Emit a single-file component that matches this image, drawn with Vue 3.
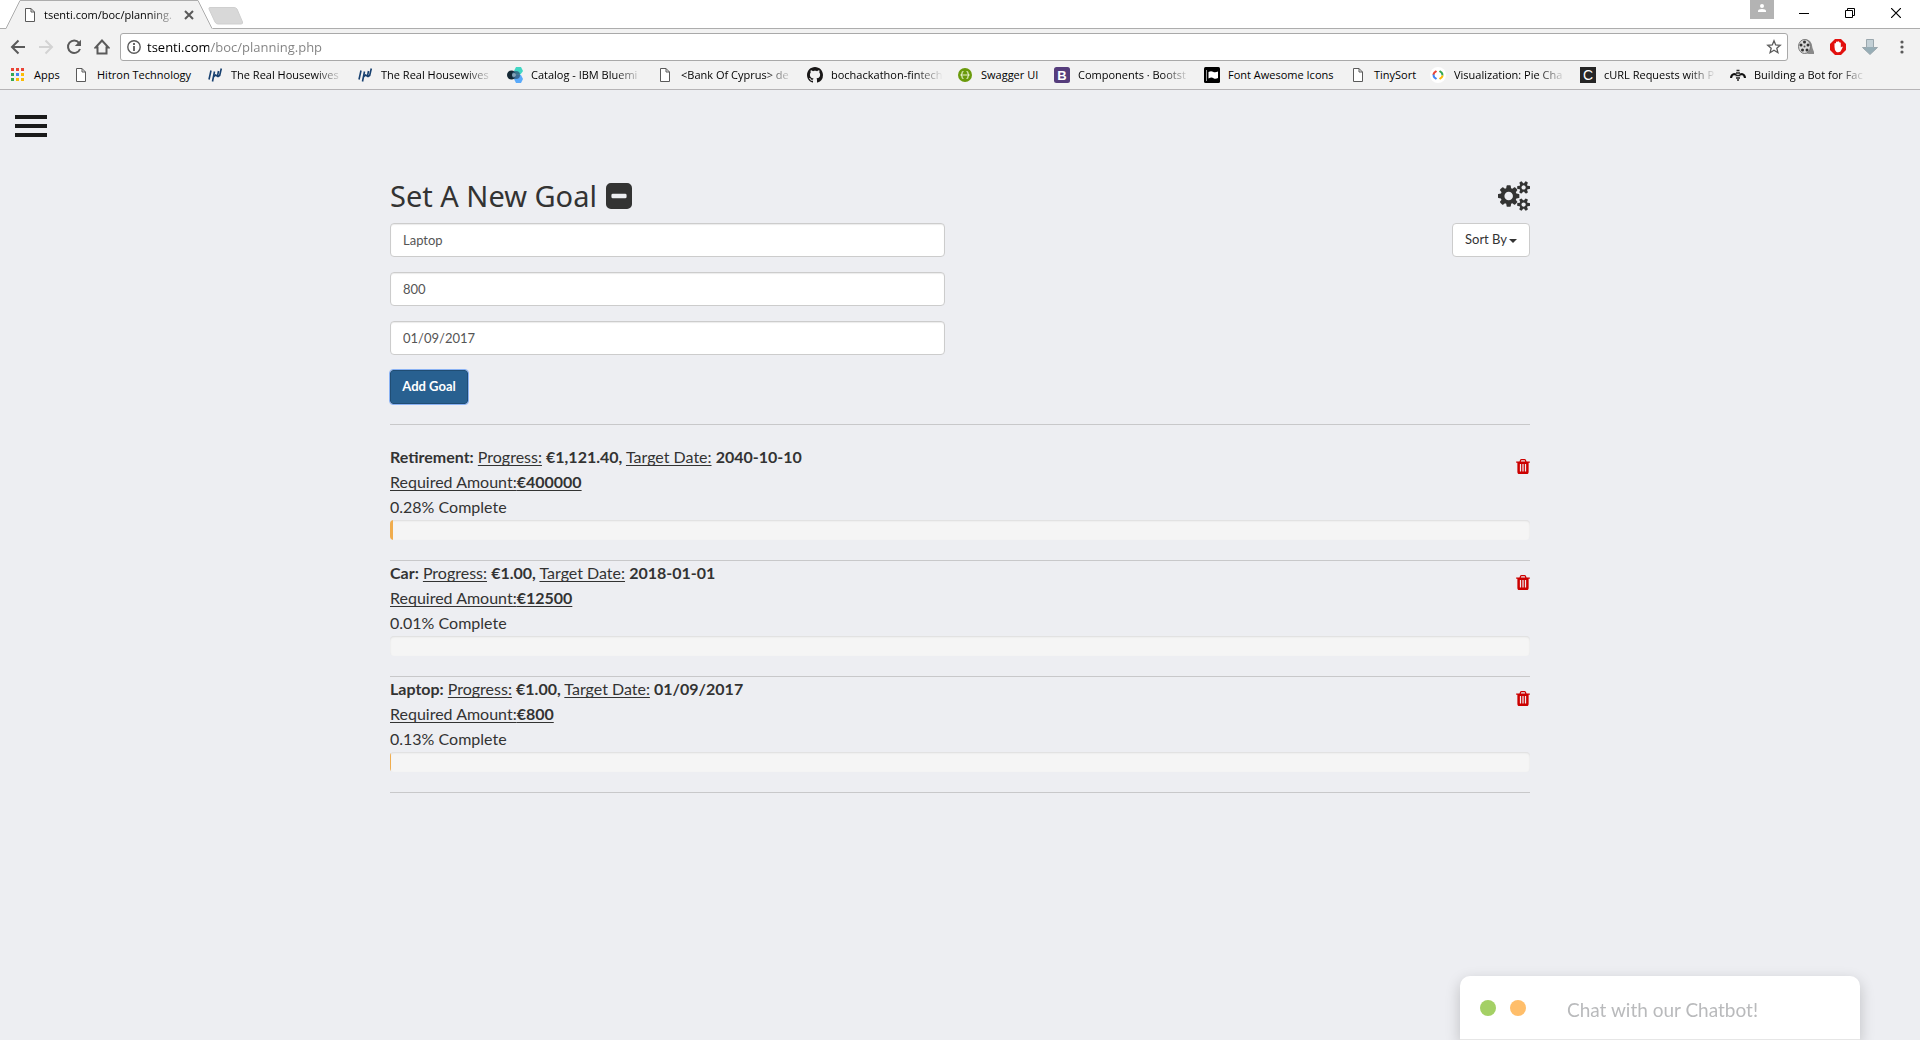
<script setup>
import { ref } from 'vue'

const url = ref('tsenti.com/boc/planning.php')
const goalName = ref('Laptop')
const goalAmount = ref('800')
const goalDate = ref('01/09/2017')
const sortBy = ref('')

const bookmarks = [
  { icon: 'apps', label: 'Apps', width: 25 },
  { icon: 'page', label: 'Hitron Technology', width: 96 },
  { icon: 'waves', label: 'The Real Housewives', width: 112 },
  { icon: 'waves', label: 'The Real Housewives', width: 112 },
  { icon: 'bluemix', label: 'Catalog - IBM Bluemi', width: 112 },
  { icon: 'page', label: '<Bank Of Cyprus> de', width: 112 },
  { icon: 'github', label: 'bochackathon-fintech', width: 112 },
  { icon: 'swagger', label: 'Swagger UI', width: 59 },
  { icon: 'bootstrap', label: 'Components · Bootst', width: 112 },
  { icon: 'flag', label: 'Font Awesome Icons', width: 108 },
  { icon: 'page', label: 'TinySort', width: 42 },
  { icon: 'charts', label: 'Visualization: Pie Cha', width: 112 },
  { icon: 'curl', label: 'cURL Requests with P', width: 112 },
  { icon: 'bot', label: 'Building a Bot for Fac', width: 112 },
]
const clipped = (b) => b.width === 112

const appDots = ['#ea4335', '#ea4335', '#ea4335', '#34a853', '#4285f4', '#fbbc05', '#34a853', '#fbbc05', '#fbbc05']

const goals = [
  { name: 'Retirement', progress: '€1,121.40', date: '2040-10-10', required: '€400000', percent: 0.28 },
  { name: 'Car', progress: '€1.00', date: '2018-01-01', required: '€12500', percent: 0.01 },
  { name: 'Laptop', progress: '€1.00', date: '01/09/2017', required: '€800', percent: 0.13 },
]
</script>

<template>
  <div class="window">
    <header class="browser">
      <div class="tabstrip">
        <div class="tab">
          <svg class="tab-shape" viewBox="0 0 208 29" width="208" height="29" aria-hidden="true">
            <path d="M0 29V28.500H1L15 .500H193L207 28.500H208V29Z" fill="#f2f2f2" />
            <path d="M0 28.500H1L15 .500H193L207 28.500" fill="none" stroke="#adadad" />
          </svg>
          <svg class="page-icon" viewBox="0 0 16 16" width="16" height="16" aria-hidden="true">
            <path d="M3.500 1.500H9L12.500 5V14.500H3.500ZM9 1.500V5H12.500" fill="#fff" stroke="#5a5a5a" />
          </svg>
          <span class="tab-title fade">tsenti.com/boc/planning.</span>
          <button class="plain tab-close" aria-label="Close tab">
            <svg viewBox="0 0 10 10" width="10" height="10"><path d="M1 1L9 9M9 1L1 9" stroke="#5a5a5a" stroke-width="2" /></svg>
          </button>
        </div>
        <button class="plain new-tab" aria-label="New tab">
          <svg viewBox="0 0 36 18" width="36" height="18"><path d="M2 .500H26Q28 .500 29 2L34.500 15Q35 17 33 17H10Q8 17 7 15L1 2Q.500 .500 2 .500Z" fill="#d8d8d8" stroke="#cfcfcf" /></svg>
        </button>
        <div class="window-controls">
          <button class="plain avatar" aria-label="Profile">
            <svg viewBox="0 0 24 19" width="24" height="19"><rect width="24" height="19" fill="#b3b3b3" /><circle cx="12" cy="6" r="2" fill="#fff" /><path d="M8 12V11Q8 9 12 9T16 11V12Z" fill="#fff" /></svg>
          </button>
          <button class="plain" aria-label="Minimise">
            <svg viewBox="0 0 10 10" width="10" height="10"><path d="M0 5.500H10" stroke="#000" /></svg>
          </button>
          <button class="plain" aria-label="Restore">
            <svg viewBox="0 0 10 10" width="10" height="10"><path d="M.500 2.500H7.500V9.500H.500ZM2.500 2.500V.500H9.500V7.500H7.500" fill="none" stroke="#000" /></svg>
          </button>
          <button class="plain" aria-label="Close">
            <svg viewBox="0 0 10 10" width="10" height="10"><path d="M0 0L10 10M10 0L0 10" stroke="#000" stroke-width="1.200" /></svg>
          </button>
        </div>
      </div>

      <div class="toolbar">
        <button class="plain nav" aria-label="Back">
          <svg viewBox="0 0 16 16" width="16" height="16"><path d="M15 8H2.500M8.500 1.500L2 8L8.500 14.500" fill="none" stroke="#5a5a5a" stroke-width="2" /></svg>
        </button>
        <button class="plain nav" aria-label="Forward">
          <svg viewBox="0 0 16 16" width="16" height="16"><path d="M1 8H13.500M7.500 1.500L14 8L7.500 14.500" fill="none" stroke="#d3d3d3" stroke-width="2" /></svg>
        </button>
        <button class="plain nav" aria-label="Reload">
          <svg viewBox="0 0 16 16" width="16" height="16"><path d="M13 3.800A6.200 6.200 0 1 0 14 10" fill="none" stroke="#5a5a5a" stroke-width="2" /><path d="M15 .800V7H8.800Z" fill="#5a5a5a" /></svg>
        </button>
        <button class="plain nav" aria-label="Home">
          <svg viewBox="0 0 16 16" width="16" height="16"><path d="M8 1.500L1.500 8.500H3.500V14.500H12.500V8.500H14.500Z" fill="none" stroke="#5a5a5a" stroke-width="2" /></svg>
        </button>
        <div class="omnibox">
          <svg viewBox="0 0 14 14" width="14" height="14" aria-hidden="true"><circle cx="7" cy="7" r="6.200" fill="none" stroke="#5a5a5a" stroke-width="1.400" /><path d="M7 6V11M7 3V5" stroke="#5a5a5a" stroke-width="1.800" /></svg>
          <input v-model="url" class="url" type="text" aria-label="Address" />
          <button class="plain" aria-label="Bookmark this page">
            <svg viewBox="0 0 16 16" width="16" height="16"><path d="M8 1.800L9.700 6L14.200 6.300L10.800 9.200L11.900 13.700L8 11.200L4.100 13.700L5.200 9.200L1.800 6.300L6.300 6Z" fill="none" stroke="#5a5a5a" stroke-width="1.300" /></svg>
          </button>
        </div>
        <button class="plain ext" aria-label="Video extension">
          <svg viewBox="0 0 16 16" width="16" height="16">
            <path d="M6 0Q14 0 14.500 9L16 13V15L11 15L6 14Z" fill="#8a8a8a" />
            <ellipse cx="6.500" cy="7.500" rx="6" ry="7" fill="#dadada" stroke="#777" />
            <circle cx="6.500" cy="3" r="1.500" fill="#333" /><circle cx="3" cy="6" r="1.500" fill="#333" /><circle cx="10" cy="6" r="1.500" fill="#333" /><circle cx="4.500" cy="11" r="1.500" fill="#333" /><circle cx="9" cy="11" r="1.500" fill="#333" /><circle cx="6.500" cy="7.500" r="1" fill="#555" />
          </svg>
        </button>
        <button class="plain ext" aria-label="Content blocker">
          <svg viewBox="0 0 16 16" width="16" height="16">
            <path d="M5 0H11L16 5V11L11 16H5L0 11V5Z" fill="#e2110f" />
            <path d="M4.500 8V4.500Q5.200 3.500 6 4.500V3Q6.800 2 7.600 3V2.500Q8.400 1.800 9.200 2.800V3.500Q10.200 2.800 10.800 4V8.500L12 7.500Q13 7.500 12.500 8.700L10.500 12.500Q8.500 14 6.200 12.800Q4.500 11 4.500 8Z" fill="#fff" />
          </svg>
        </button>
        <button class="plain ext" aria-label="Downloads">
          <svg viewBox="0 0 16 16" width="16" height="16"><path d="M4.500 .500H11.500V8.500H15.500L8 15.500L.500 8.500H4.500Z" fill="#96adb6" stroke="#9aa7ad" /><path d="M5 1H11V8H5Z" fill="#c3d0d6" /></svg>
        </button>
        <button class="plain ext" aria-label="Menu">
          <svg viewBox="0 0 16 16" width="16" height="16"><circle cx="8" cy="3" r="1.600" fill="#5a5a5a" /><circle cx="8" cy="8" r="1.600" fill="#5a5a5a" /><circle cx="8" cy="13" r="1.600" fill="#5a5a5a" /></svg>
        </button>
      </div>

      <nav class="bookmarks" aria-label="Bookmarks">
        <a v-for="(b, i) in bookmarks" :key="i" href="#" class="bookmark">
          <svg viewBox="0 0 16 16" width="16" height="16" aria-hidden="true">
            <template v-if="b.icon === 'apps'">
              <rect v-for="(c, n) in appDots" :key="n" :x="1 + (n % 3) * 5" :y="1 + Math.floor(n / 3) * 5" width="3" height="3" :fill="c" />
            </template>
            <path v-else-if="b.icon === 'page'" d="M3.500 1.500H9L12.500 5V14.500H3.500ZM9 1.500V5H12.500" fill="#fff" stroke="#5a5a5a" />
            <path v-else-if="b.icon === 'waves'" d="M4 3.500L2 12.500M7.500 4.500L5.500 14.500M6.500 10L8.500 8L11 9.500L12.700 8.500L14.300 1.500M11.500 4L10.500 9" fill="none" stroke="#17406f" stroke-width="1.600" />
            <template v-else-if="b.icon === 'bluemix'">
              <path d="M9 0H14L16 4L13.500 7.500H9L7 4Z" fill="#41d6c3" />
              <path d="M9 8H14L16 12L14 16H9L7 12Z" fill="#5aaafa" />
              <circle cx="4.500" cy="8" r="4.500" fill="#152935" />
              <circle cx="9" cy="8" r="4" fill="#325c80" opacity=".8" />
              <circle cx="7" cy="8" r="2" fill="#a9c7d8" opacity=".7" />
            </template>
            <path v-else-if="b.icon === 'github'" fill="#191717" d="M8 0C3.580 0 0 3.580 0 8c0 3.540 2.290 6.530 5.470 7.590.4.070.55-.17.55-.38 0-.19-.01-.82-.01-1.490-2.010.37-2.530-.49-2.690-.94-.09-.23-.48-.94-.82-1.130-.28-.15-.68-.52-.01-.53.63-.01 1.080.58 1.230.82.72 1.210 1.870.87 2.330.66.07-.52.28-.87.51-1.070-1.780-.2-3.640-.89-3.640-3.950 0-.87.31-1.590.82-2.150-.08-.2-.36-1.020.08-2.120 0 0 .67-.21 2.200.82.64-.18 1.320-.27 2-.27s1.360.09 2 .27c1.530-1.040 2.200-.82 2.200-.82.44 1.100.16 1.920.08 2.120.51.56.82 1.270.82 2.150 0 3.070-1.870 3.750-3.650 3.950.29.25.54.73.54 1.480 0 1.070-.01 1.930-.01 2.200 0 .21.15.46.55.38A8.010 8.010 0 0 0 16 8c0-4.420-3.580-8-8-8z" />
            <template v-else-if="b.icon === 'swagger'">
              <circle cx="8" cy="8" r="7" fill="#6a9a0b" />
              <path d="M6.500 4.500Q5 4.500 5 6V7L4 8L5 9V10Q5 11.500 6.500 11.500M9.500 4.500Q11 4.500 11 6V7L12 8L11 9V10Q11 11.500 9.500 11.500M5.500 8H10.500" fill="none" stroke="#e3efc9" stroke-width="1.200" />
            </template>
            <template v-else-if="b.icon === 'bootstrap'">
              <rect width="16" height="16" rx="2.500" fill="#563d7c" />
              <text x="8" y="12.500" text-anchor="middle" font-size="13" font-weight="700" font-family="Liberation Sans, sans-serif" fill="#fff">B</text>
            </template>
            <template v-else-if="b.icon === 'flag'">
              <rect width="16" height="16" rx="1.500" fill="#000" />
              <path d="M4.500 5Q7 3.500 9 4.700T14 4.500V11Q11.500 12.500 9.500 11.200T4.500 11.500Z" fill="#fff" />
              <path d="M2.500 3V14" stroke="#999" />
            </template>
            <template v-else-if="b.icon === 'charts'">
              <circle cx="8" cy="8" r="8" fill="#fff" />
              <g fill="none" stroke-width="2"><path d="M6.500 4L4.500 5.500Q3.500 6.500 3.500 8" stroke="#e94235" /><path d="M3.500 7.500Q3.500 9.500 4.500 10.500L6.500 12" stroke="#4285f4" /><path d="M9.500 4L11.500 5.500Q12.500 6.500 12.500 8.500" stroke="#34a853" /><path d="M12.500 8.500Q12.500 9.500 11.500 10.500L9.500 12" stroke="#fbbc05" /></g>
            </template>
            <template v-else-if="b.icon === 'curl'">
              <rect width="16" height="16" fill="#262626" />
              <text x="8" y="13" text-anchor="middle" font-size="14" font-family="Liberation Sans, sans-serif" fill="#fff">C</text>
            </template>
            <template v-else>
              <path d="M0 11Q0 7 4 6L6.500 6.500V8L3 8.500L2 11ZM16 11Q16 7 12 6L9.500 6.500V8L13 8.500L14 11Z" fill="#111" />
              <path d="M6.500 3.500H9.500M6 6H10M5.500 8.500H10.500M6 11H10M7 13H9" stroke="#222" stroke-width="1.500" />
            </template>
          </svg>
          <span class="bookmark-label" :class="{ fade: clipped(b) }" :style="{ width: b.width + 'px' }">{{ b.label }}</span>
        </a>
      </nav>
    </header>

    <main class="page">
      <button class="plain menu" aria-label="Open menu"><i></i><i></i><i></i></button>

      <div class="container">
        <div class="heading">
          <h2>Set A New Goal</h2>
          <button class="plain" aria-label="Collapse form">
            <svg viewBox="128 128 1536 1536" width="26" height="26"><path fill="#333" d="M1344 960v-128q0-26-19-45t-45-19h-768q-26 0-45 19t-19 45v128q0 26 19 45t45 19h768q26 0 45-19t19-45zm320-544v960q0 119-84.500 203.500t-203.500 84.500h-960q-119 0-203.500-84.500t-84.500-203.500v-960q0-119 84.500-203.500t203.500-84.500h960q119 0 203.500 84.500t84.500 203.500z" /></svg>
          </button>
          <button class="plain settings" aria-label="Settings">
            <svg viewBox="0 0 1920 1792" width="32" height="30"><path fill="#333" d="M896 896q0-106-75-181t-181-75-181 75-75 181 75 181 181 75 181-75 75-181zm768 512q0-52-38-90t-90-38-90 38-38 90q0 53 37.500 90.500t90.500 37.500 90.500-37.500 37.500-90.500zm0-1024q0-52-38-90t-90-38-90 38-38 90q0 53 37.500 90.500t90.500 37.500 90.500-37.500 37.500-90.500zm-384 421v185q0 10-7 19.500t-16 10.500l-155 24q-11 35-32 76 34 48 90 115 7 11 7 20 0 12-7 19-23 30-82.500 89.500t-78.500 59.500q-11 0-21-7l-115-90q-37 19-77 31-11 108-23 155-7 24-30 24h-186q-11 0-20-7.500t-10-17.500l-23-153q-34-10-75-31l-118 89q-7 7-20 7-11 0-21-8-144-133-144-160 0-9 7-19 10-14 41-53t47-61q-23-44-35-82l-152-24q-10-1-17-9.500t-7-19.500v-185q0-10 7-19.500t16-10.500l155-24q11-35 32-76-34-48-90-115-7-11-7-20 0-12 7-20 22-30 82-89t79-59q11 0 21 7l115 90q34-18 77-32 11-108 23-154 7-24 30-24h186q11 0 20 7.500t10 17.500l23 153q34 10 75 31l118-89q8-7 20-7 11 0 21 8 144 133 144 160 0 8-7 19-12 16-42 54t-45 60q23 48 34 82l152 23q10 2 17 10.500t7 19.500zm640 533v140q0 16-149 31-12 27-30 52 51 113 51 138 0 4-4 7-122 71-124 71-8 0-46-47t-52-68q-20 2-30 2t-30-2q-14 21-52 68t-46 47q-2 0-124-71-4-3-4-7 0-25 51-138-18-25-30-52-149-15-149-31v-140q0-16 149-31 13-29 30-52-51-113-51-138 0-4 4-7 4-2 35-20t59-34 30-16q8 0 46 46.500t52 67.500q20-2 30-2t30 2q51-71 92-112l6-2q4 0 124 70 4 3 4 7 0 25-51 138 17 23 30 52 149 15 149 31zm0-1024v140q0 16-149 31-12 27-30 52 51 113 51 138 0 4-4 7-122 71-124 71-8 0-46-47t-52-68q-20 2-30 2t-30-2q-14 21-52 68t-46 47q-2 0-124-71-4-3-4-7 0-25 51-138-18-25-30-52-149-15-149-31v-140q0-16 149-31 13-29 30-52-51-113-51-138 0-4 4-7 4-2 35-20t59-34 30-16q8 0 46 46.500t52 67.500q20-2 30-2t30 2q51-71 92-112l6-2q4 0 124 70 4 3 4 7 0 25-51 138 17 23 30 52 149 15 149 31z" /></svg>
          </button>
        </div>

        <div class="controls">
          <form class="goal-form" @submit.prevent>
            <input v-model="goalName" type="text" aria-label="Goal name" />
            <input v-model="goalAmount" type="text" aria-label="Required amount" />
            <input v-model="goalDate" type="text" aria-label="Target date" />
            <button class="add" type="submit">Add Goal</button>
          </form>
          <div class="sort">
            <select v-model="sortBy" aria-label="Sort goals">
              <option value="">Sort By</option>
            </select>
          </div>
        </div>

        <section class="goals">
          <article v-for="g in goals" :key="g.name" class="goal">
            <div class="goal-head">
              <div class="goal-text">
                <p><b>{{ g.name }}:</b> <u>Progress:</u> <b>{{ g.progress }},</b> <u>Target Date:</u> <b>{{ g.date }}</b></p>
                <p><u>Required Amount:<b>{{ g.required }}</b></u></p>
                <p>{{ g.percent }}% Complete</p>
              </div>
              <button class="plain trash" :aria-label="'Delete ' + g.name">
                <svg viewBox="192 128 1408 1536" width="14" height="15"><path fill="#c00" d="M704 1376v-704q0-14-9-23t-23-9h-64q-14 0-23 9t-9 23v704q0 14 9 23t23 9h64q14 0 23-9t9-23zm256 0v-704q0-14-9-23t-23-9h-64q-14 0-23 9t-9 23v704q0 14 9 23t23 9h64q14 0 23-9t9-23zm256 0v-704q0-14-9-23t-23-9h-64q-14 0-23 9t-9 23v704q0 14 9 23t23 9h64q14 0 23-9t9-23zm-544-992h448l-48-117q-7-9-17-11h-317q-10 2-17 11zm928 32v64q0 14-9 23t-23 9h-96v948q0 83-47 143.500t-113 60.500h-832q-66 0-113-58.500t-47-141.500v-952h-96q-14 0-23-9t-9-23v-64q0-14 9-23t23-9h309l70-167q15-37 54-63t79-26h320q40 0 79 26t54 63l70 167h309q14 0 23 9t9 23z" /></svg>
              </button>
            </div>
            <div class="progress"><div v-if="g.percent >= 0.05" class="fill" :style="{ width: g.percent + '%' }"></div></div>
          </article>
        </section>
      </div>

      <aside class="chat">
        <span class="dot green"></span>
        <span class="dot orange"></span>
        <span class="chat-title">Chat with our Chatbot!</span>
      </aside>
    </main>
  </div>
</template>

<style>
body {
  margin: 0;
  background: #edeef2;
}
</style>

<style scoped>
* {
  box-sizing: border-box;
}
.window {
  display: flex;
  flex-direction: column;
  min-height: 100vh;
  color: #333;
  font: 16px/25px Lato, sans-serif;
}
svg {
  display: block;
  flex: none;
}
.plain {
  display: flex;
  align-items: center;
  justify-content: center;
  flex: none;
  padding: 0;
  border: 0;
  background: none;
}
.fade {
  -webkit-mask-image: linear-gradient(90deg, #000 calc(100% - 28px), transparent);
  mask-image: linear-gradient(90deg, #000 calc(100% - 28px), transparent);
}

/* Browser frame */
.browser {
  background: #f2f2f2;
  border-bottom: 1px solid #b6b4b6;
  color: #000;
  font: 11px/16px "Open Sans", sans-serif;
}
.tabstrip {
  display: flex;
  height: 29px;
  padding: 0 1px 0 5px;
  background: linear-gradient(#fff 28px, #adadad 28px);
}
.tab {
  position: relative;
  display: flex;
  align-items: center;
  width: 208px;
  padding-left: 17px;
}
.tab > * {
  position: relative;
}
.tab .tab-shape {
  position: absolute;
  top: 0;
  left: 0;
}
.tab-title {
  width: 134px;
  margin: 0 6px;
  white-space: nowrap;
}
.new-tab {
  height: 32px;
  margin-left: -5px;
}
.window-controls {
  display: flex;
  margin-left: auto;
}
.window-controls .plain {
  width: 46px;
  height: 26px;
}
.window-controls .avatar {
  width: 24px;
  height: 19px;
  margin-right: 7px;
}
.toolbar {
  display: flex;
  align-items: center;
  height: 36px;
  padding: 0 10px;
}
.nav {
  margin-right: 12px;
}
.omnibox {
  display: flex;
  align-items: center;
  flex: 1;
  height: 28px;
  margin: 0 10px 0 -2px;
  padding: 0 5px 0 6px;
  background: #fff;
  border: 1px solid #a9a9a9;
  border-radius: 3px;
}
.url {
  flex: 1;
  min-width: 0;
  margin: 0 6px;
  padding: 0;
  border: 0;
  outline: 0;
  color: transparent;
  background: linear-gradient(90deg, #000 62px, #808080 62px);
  -webkit-background-clip: text;
  background-clip: text;
  font: 13px/20px "Open Sans", sans-serif;
}
.ext + .ext {
  margin-left: 16px;
}
.bookmarks {
  display: flex;
  align-items: center;
  gap: 14px;
  height: 24px;
  padding: 0 10px 4px;
}
.bookmark {
  display: flex;
  align-items: center;
  gap: 8px;
  color: #000;
  text-decoration: none;
}
.bookmark-label {
  white-space: nowrap;
}

/* Page */
.page {
  flex: 1;
  background: #edeef2;
}
.menu {
  flex-direction: column;
  gap: 5px;
  margin: 25px 15px 0;
}
.menu i {
  width: 32px;
  height: 4px;
  background: #1a1a1a;
}
.container {
  max-width: 1140px;
  margin: 0 auto;
  padding: 38px 0 80px;
}
.heading {
  display: flex;
  align-items: center;
  gap: 9px;
  height: 42px;
  margin-bottom: 6px;
}
h2 {
  margin: 0;
  font: 400 29px/42px "Noto Sans", sans-serif;
}
.settings {
  margin-left: auto;
}
.controls {
  display: flex;
  align-items: flex-start;
  justify-content: space-between;
  padding-bottom: 20px;
  border-bottom: 1px solid #c8c8ca;
}
.goal-form {
  display: flex;
  flex-direction: column;
  align-items: flex-start;
  gap: 15px;
  width: 555px;
}
.goal-form input {
  width: 100%;
  height: 34px;
  padding: 0 12px;
  border: 1px solid #ccc;
  border-radius: 4px;
  background: #fff;
  box-shadow: inset 0 1px 1px rgba(0, 0, 0, 0.08);
  color: #555;
  font: 13px/20px Lato, sans-serif;
}
.add {
  width: 78px;
  height: 34px;
  padding: 0 0 2px;
  border: 1px solid #204d74;
  border-radius: 3px;
  outline: 1px solid #8ab2f4;
  background: #286090;
  color: #fff;
  font: 700 13px/20px Lato, sans-serif;
}
.sort {
  position: relative;
}
.sort select {
  width: 78px;
  height: 34px;
  padding: 0 12px 2px;
  appearance: none;
  border: 1px solid #ccc;
  border-radius: 4px;
  background: #fff;
  color: #333;
  font: 13px/20px Lato, sans-serif;
}
.sort::after {
  content: "";
  position: absolute;
  top: 16px;
  right: 13px;
  border: 4px solid transparent;
  border-top-color: #333;
  border-bottom: 0;
  pointer-events: none;
}
.goals {
  padding-top: 20px;
}
.goal {
  padding-bottom: 20px;
  border-bottom: 1px solid #c8c8ca;
}
.goal-head {
  display: flex;
  justify-content: space-between;
  align-items: flex-start;
}
.goal-text {
  margin: -1px 0 1px;
}
.goal p {
  margin: 0;
}
.goal u {
  text-underline-offset: 2px;
  text-decoration-skip-ink: none;
}
.trash {
  margin-top: 14px;
}
.progress {
  height: 20px;
  overflow: hidden;
  border-radius: 4px;
  background: #f5f5f5;
  box-shadow: inset 0 1px 2px rgba(0, 0, 0, 0.1);
}
.fill {
  height: 100%;
  background: #f0ad4e;
}

/* Chat widget */
.chat {
  position: fixed;
  right: 60px;
  bottom: 0;
  display: flex;
  align-items: center;
  gap: 14px;
  width: 400px;
  height: 64px;
  padding: 0 20px;
  border-bottom: 1px solid #e6e6e6;
  border-radius: 10px 10px 0 0;
  background: #fff;
  box-shadow: 0 5px 15px rgba(0, 0, 0, 0.2);
}
.dot {
  width: 16px;
  height: 16px;
  border-radius: 50%;
}
.green {
  background: #a4d065;
}
.orange {
  background: #ffbe6a;
}
.chat-title {
  margin-left: 27px;
  padding-top: 3px;
  color: #b9babc;
  font-size: 19px;
}
</style>
